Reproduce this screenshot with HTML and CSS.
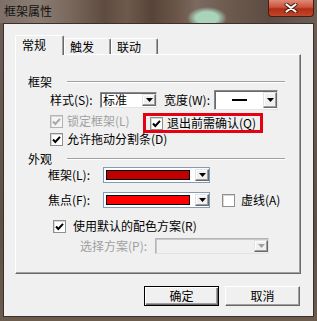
FILE: index.html
```html
<!DOCTYPE html>
<html lang="zh-CN">
    <head>
        <meta charset="UTF-8" />
        <title>框架属性</title>
        <link rel="stylesheet" href="styles.css">
    </head>
    <body>
        <div class="window">
            <div class="titlebar">
                <span class="title">框架属性</span>
                <div class="close-btn">
                    <svg width="14" height="10" viewBox="0 0 14 10">
                        <path d="M2.5 1.5 L11.5 8.5 M11.5 1.5 L2.5 8.5" stroke="#4a1409" stroke-width="4" stroke-linecap="round" />
                        <path d="M2.5 1.5 L11.5 8.5 M11.5 1.5 L2.5 8.5" stroke="#fff" stroke-width="2.2" stroke-linecap="round" />
                    </svg>
                </div>
            </div>

            <div class="client">
                <div class="tabs">
                    <div class="tab active">常规</div>
                    <div class="tab">触发</div>
                    <div class="tab">联动</div>
                </div>

                <div class="panel">
                    <div class="group-title"><span>框架</span></div>

                    <div class="row row-style">
                        <span class="label label-style">样式(S):</span>
                        <div class="combo combo-style">
                            <span class="combo-field">标准</span>
                            <span class="combo-btn">
                                <svg width="7" height="4" viewBox="0 0 7 4"><path d="M0 0h7L3.5 4z" /></svg>
                            </span>
                        </div>
                        <span class="label label-width">宽度(W):</span>
                        <div class="combo combo-width">
                            <span class="combo-field"><span class="line-sample"></span></span>
                            <span class="combo-btn">
                                <svg width="7" height="4" viewBox="0 0 7 4"><path d="M0 0h7L3.5 4z" /></svg>
                            </span>
                        </div>
                    </div>

                    <div class="row row-lock">
                        <span class="check checked disabled">
                            <svg width="11" height="11" viewBox="0 0 11 11"><path d="M2 5.5 L4.3 8 L9 2.8" /></svg>
                        </span>
                        <span class="check-text lock-text disabled-text">锁定框架(L)</span>
                        <div class="highlight">
                            <span class="check checked">
                                <svg width="11" height="11" viewBox="0 0 11 11"><path d="M2 5.5 L4.3 8 L9 2.8" /></svg>
                            </span>
                            <span class="check-text">退出前需确认(Q)</span>
                        </div>
                    </div>

                    <div class="row row-allow">
                        <span class="check checked">
                            <svg width="11" height="11" viewBox="0 0 11 11"><path d="M2 5.5 L4.3 8 L9 2.8" /></svg>
                        </span>
                        <span class="check-text">允许拖动分割条(D)</span>
                    </div>

                    <div class="group-title group-look"><span>外观</span></div>

                    <div class="row row-color">
                        <span class="label label-color">框架(L):</span>
                        <div class="combo combo-color">
                            <span class="combo-field"><span class="swatch swatch-dark"></span></span>
                            <span class="combo-btn">
                                <svg width="7" height="4" viewBox="0 0 7 4"><path d="M0 0h7L3.5 4z" /></svg>
                            </span>
                        </div>
                    </div>

                    <div class="row row-color row-focus">
                        <span class="label label-color">焦点(F):</span>
                        <div class="combo combo-color">
                            <span class="combo-field"><span class="swatch swatch-bright"></span></span>
                            <span class="combo-btn">
                                <svg width="7" height="4" viewBox="0 0 7 4"><path d="M0 0h7L3.5 4z" /></svg>
                            </span>
                        </div>
                        <span class="check dashed-check"></span>
                        <span class="check-text dashed-text">虚线(A)</span>
                    </div>

                    <div class="row row-default">
                        <span class="check checked">
                            <svg width="11" height="11" viewBox="0 0 11 11"><path d="M2 5.5 L4.3 8 L9 2.8" /></svg>
                        </span>
                        <span class="check-text default-text">使用默认的配色方案(R)</span>
                    </div>

                    <div class="row row-scheme">
                        <span class="label label-scheme disabled-text">选择方案(P):</span>
                        <div class="combo combo-scheme disabled">
                            <span class="combo-field"></span>
                            <span class="combo-btn">
                                <svg width="7" height="4" viewBox="0 0 7 4"><path d="M0 0h7L3.5 4z" /></svg>
                            </span>
                        </div>
                    </div>
                </div>

                <div class="buttons">
                    <button class="btn btn-default">确定</button>
                    <button class="btn">取消</button>
                </div>
            </div>
        </div>
    </body>
</html>
```

FILE: styles.css
```css
* {
    margin: 0;
    padding: 0;
    box-sizing: border-box;
}

body {
    font-family: "Noto Sans CJK SC", "Liberation Sans", sans-serif;
    font-size: 12px;
    color: #000;
    background: #5f5046;
}

.window {
    width: 317px;
    height: 321px;
    padding: 0 3px 4px 3px;
    background: linear-gradient(180deg, #6d5f55 0%, #5e5045 70%, #6b5c4e 100%);
    overflow: hidden;
}

/* title bar with the blurred glass behind it */
.titlebar {
    height: 23px;
    margin: 0 -3px;
    display: flex;
    align-items: flex-start;
    justify-content: space-between;
    background:
        radial-gradient(ellipse 20px 11px at 207px 18px, #a9d4bb 55%, rgba(169, 212, 187, 0) 100%),
        linear-gradient(90deg, #7e7068 0%, #8a7c72 12%, #7a685d 22%, #5f4c41 33%, #6e5a4c 40%, #574439 48%, #6c5649 56%, #7b6a5f 62%, #6a584c 74%, #5c4c43 85%, #6d5f56 100%);
}

.title {
    padding: 3px 0 0 4px;
    line-height: 16px;
    color: #111;
}

.close-btn {
    width: 46px;
    height: 17px;
    margin-right: 3px;
    display: flex;
    align-items: center;
    justify-content: center;
    border: 1px solid #4c1c12;
    border-top: none;
    border-radius: 0 0 4px 4px;
    background: linear-gradient(180deg, #e08a78 0%, #c9533d 45%, #b22d15 55%, #c2472c 100%);
}

.client {
    height: 294px;
    border: 1px solid #3b302a;
    background: #f0f0f0;
    padding: 11px 13px 0 11px;
}

/* tabs */
.tabs {
    height: 19px;
    display: flex;
    align-items: flex-end;
    position: relative;
    z-index: 1;
}

.tab {
    width: 47px;
    height: 16px;
    padding-left: 5px;
    line-height: 15px;
    background: #f0f0f0;
    border-top: 1px solid #fff;
    border-left: 1px solid #fff;
    border-right: 1px solid #696969;
    border-radius: 2px 2px 0 0;
    box-shadow: inset -1px 0 #a0a0a0;
}

.tab.active {
    width: 49px;
    height: 20px;
    margin-bottom: -1px;
    padding-left: 6px;
    line-height: 18px;
}

.panel {
    width: 286px;
    height: 220px;
    padding: 19px 15px 0 12px;
    border-top: 1px solid #fff;
    border-left: 1px solid #fff;
    border-right: 1px solid #696969;
    border-bottom: 1px solid #696969;
    box-shadow: inset -1px -1px #a0a0a0;
}

.group-title {
    height: 16px;
    display: flex;
    align-items: center;
    gap: 15px;
    line-height: 16px;
}

.group-title::after {
    content: "";
    flex: 1;
    border-top: 1px solid #a0a0a0;
    border-bottom: 1px solid #fff;
}

.group-look {
    margin-top: 4px;
}

.row {
    display: flex;
    align-items: center;
}

.label {
    flex: none;
    line-height: 16px;
}

.disabled-text {
    color: #a0a0a0;
}

.row-style {
    height: 20px;
    padding-left: 22px;
}

.label-style {
    width: 50px;
}

.label-width {
    width: 50px;
    margin-left: 7px;
}

.row-lock {
    height: 18px;
    margin-top: 3px;
    padding-left: 22px;
    align-items: flex-start;
}

.row-lock > .check {
    margin-top: 2px;
}

.lock-text {
    width: 76px;
}

.row-allow {
    height: 16px;
    padding-left: 22px;
}

.row-color {
    height: 16px;
    padding-left: 20px;
}

.label-color {
    width: 55px;
}

.row-focus {
    margin-top: 9px;
}

.row-default {
    height: 16px;
    margin-top: 10px;
    padding-left: 25px;
}

.row-scheme {
    height: 16px;
    margin-top: 4px;
    padding-left: 52px;
}

.label-scheme {
    width: 75px;
}

/* checkboxes */
.check {
    flex: none;
    width: 13px;
    height: 13px;
    display: flex;
    align-items: center;
    justify-content: center;
    background: #fff;
    border: 1px solid #8e8f8f;
    box-shadow: inset 1px 1px #d8d8d8;
}

.check svg path {
    fill: none;
    stroke: #000;
    stroke-width: 2;
}

.check.disabled {
    background: #f4f4f4;
    border-color: #b4b4b4;
}

.check.disabled svg path {
    stroke: #a8a8a8;
}

.check-text {
    margin-left: 4px;
    line-height: 16px;
    white-space: nowrap;
}

.default-text {
    margin-left: 7px;
}

.dashed-check {
    margin-left: 12px;
}

.dashed-text {
    margin-left: 6px;
}

.highlight {
    height: 20px;
    display: flex;
    align-items: center;
    padding: 0 4px;
    border: 3px solid #e50012;
}

.highlight .check-text {
    line-height: 14px;
}

/* combo boxes */
.combo {
    flex: none;
    height: 16px;
    display: flex;
    background: #fff;
    border-top: 1px solid #828790;
    border-left: 1px solid #828790;
    border-right: 1px solid #e3e3e3;
    border-bottom: 1px solid #e3e3e3;
    box-shadow: inset 1px 1px #696969;
}

.combo-field {
    flex: 1;
    display: flex;
    align-items: center;
    padding-left: 2px;
    line-height: 14px;
}

.combo-btn {
    flex: none;
    width: 14px;
    display: flex;
    align-items: center;
    justify-content: center;
    margin: 1px 0;
    background: #f0f0f0;
    border-top: 1px solid #e3e3e3;
    border-left: 1px solid #e3e3e3;
    border-right: 1px solid #696969;
    border-bottom: 1px solid #696969;
    box-shadow: inset -1px -1px #a0a0a0, inset 1px 1px #fff;
}

.combo-btn svg path {
    fill: #000;
}

.combo-style {
    width: 57px;
}

.combo-width {
    width: 64px;
    height: 20px;
}

.combo-width .combo-field {
    justify-content: center;
    padding: 0;
}

.line-sample {
    width: 15px;
    border-top: 2px solid #000;
}

.combo-color {
    width: 107px;
    border: 1px solid #7f9db9;
    box-shadow: none;
}

.combo-color .combo-field {
    padding: 2px 5px 2px 2px;
}

.swatch {
    flex: 1;
    align-self: stretch;
    border: 1px solid #000;
}

.swatch-dark {
    background: #c00000;
}

.swatch-bright {
    background: #ff0000;
}

.combo-scheme {
    width: 114px;
}

.combo.disabled {
    background: #f0f0f0;
    border-top-color: #b5b5b5;
    border-left-color: #b5b5b5;
    box-shadow: inset 1px 1px #c8c8c8;
}

.combo.disabled .combo-btn svg path {
    fill: #a0a0a0;
}

/* dialog buttons */
.buttons {
    margin-top: 12px;
    display: flex;
    justify-content: flex-end;
    gap: 6px;
}

.btn {
    width: 75px;
    height: 20px;
    font-family: inherit;
    font-size: 12px;
    line-height: 16px;
    color: #000;
    background: #f0f0f0;
    border-top: 1px solid #fff;
    border-left: 1px solid #fff;
    border-right: 1px solid #696969;
    border-bottom: 1px solid #696969;
    box-shadow: inset -1px -1px #a0a0a0;
}

.btn-default {
    border: 1px solid #000;
    box-shadow: inset 1px 1px #fff, inset -1px -1px #696969, inset -2px -2px #a0a0a0;
}
```
